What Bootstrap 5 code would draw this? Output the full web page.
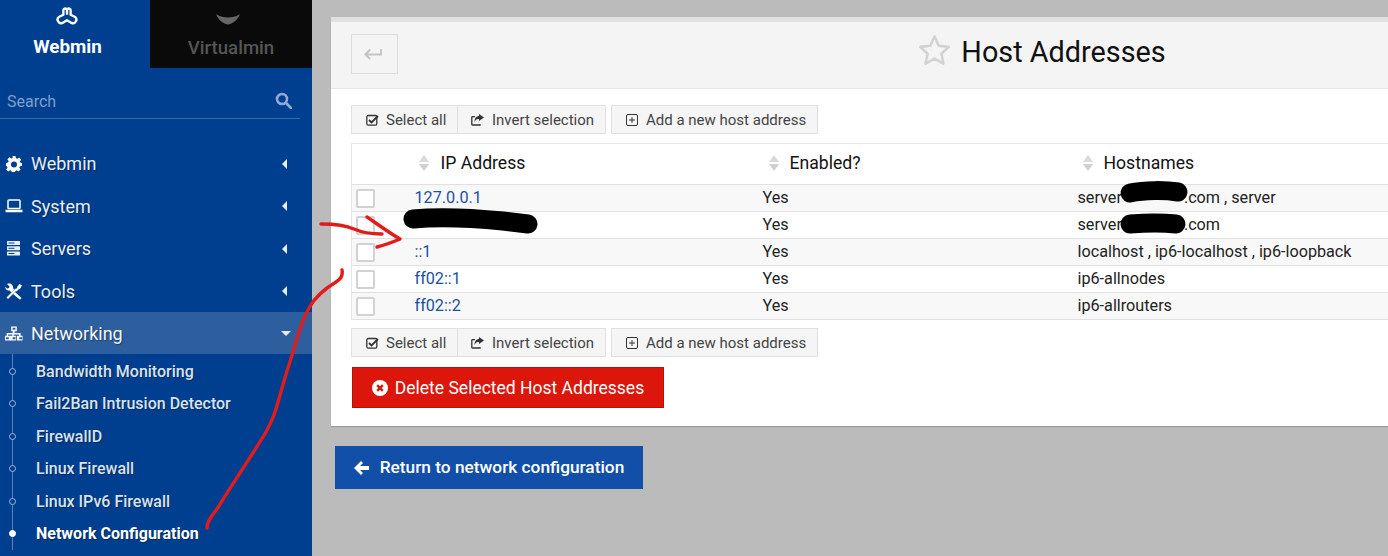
<!doctype html>
<html lang="en">
<head>
<meta charset="utf-8">
<title>Host Addresses</title>
<link href="https://cdn.jsdelivr.net/npm/bootstrap@5.3.0/dist/css/bootstrap.min.css" rel="stylesheet">
<style>
html,body{height:100%;overflow:hidden}
body{font-family:Roboto,"Liberation Sans",sans-serif;background:#bbb;color:#222;position:relative}
.shell{width:1388px;height:556px;overflow:hidden}
.side{width:312px;flex:none;background:#003f8f;color:#e8edf6;height:556px;overflow:hidden}
.tab-w,.tab-v{height:68px;text-align:center;font-weight:500;line-height:21px}
.tab-w{width:150px;color:#fff;font-weight:700;font-size:18.8px;padding:7px 15px 0 0}
.tab-v{width:162px;background:#0a0a0a;color:#565656;font-size:18.6px;padding-top:13px}
.tab-v svg{display:block;margin:0 auto 13px;transform:translateX(-3px)}
.tab-w svg{display:block;margin:0 auto 10px;transform:translateX(-1px)}
.searchbar{height:36px;margin:15px 12px 0 0;padding:9px 8px 0 7px;border-bottom:1px solid #3a68a8;color:#7f9fcc;font-size:16px;line-height:20px}
.menu-list{margin:23.45px 0 0;padding:0;list-style:none}
.menu-i{height:42.5px;padding:0 23px 0 6px;font-size:18px;color:#e8edf6;text-shadow:1px 1px 1px rgba(0,0,0,.35)}
.menu-i.on{height:42px;background:#2d5e9e;color:#f3f6fb;padding:0 22px 0 6px}
.menu-i .lbl{margin-left:8px}
.menu-i .ico{width:18px;flex:none;margin-left:-1px}
.caret-l{width:0;height:0;border:5px solid transparent;border-right-color:#e8edf6;border-left:0;margin-right:2px}
.caret-d{width:0;height:0;border:5px solid transparent;border-top-color:#e8edf6;border-bottom:0;margin-right:-1px}
.sub-list{margin:0 0 0 12px;padding:.55px 0 0;list-style:none;border-left:1px solid #5c83b9}
.sub-i{height:32.5px;line-height:33px;padding-left:23px;font-size:16px;font-weight:500;color:#d9e2f0;position:relative;text-shadow:1px 1px 1px rgba(0,0,0,.35);white-space:nowrap}
.sub-i::before{content:"";position:absolute;left:-4px;top:13px;width:7px;height:7px;border-radius:50%;border:1px solid #9db5d6;background:#003f8f}
.sub-i.on{color:#fff;font-weight:700}
.sub-i.on::before{background:#fff;border-color:#fff}
.stage{padding:17px 0 0 19px;width:1076px;flex:none}
.panel-box{width:1422px;height:409px;background:#fff;border-top:5px solid #e0e0e0;box-shadow:0 1px 1px rgba(0,0,0,.18)}
.panel-top{height:67px;background:#f4f4f4;border-bottom:1px solid #e6e6e6;padding:12px 20px;position:relative}
.back-b{width:47px;height:40px;border:1px solid #dcdcdc;background:#f4f4f4;border-radius:0;padding:0 4px 2px 0;line-height:1}
.h-title{flex:1;font-size:28.8px;line-height:34px;color:#111;font-weight:400;margin:0;gap:10px;padding-right:47px}
.h-title span{margin-top:1px}
.h-title svg{margin-bottom:3px}
.panel-body-x{padding:16px 20px 0}
.tb-row{gap:5px}
.tb-b{--bs-btn-border-radius:0;--bs-btn-padding-y:0;--bs-btn-padding-x:13px;--bs-btn-font-size:15px;--bs-btn-color:#444;--bs-btn-bg:#f5f5f5;--bs-btn-border-color:#e0e0e0;height:29px;line-height:27px;display:flex;align-items:center;gap:8px;white-space:nowrap;padding-top:1px}
.tb-b svg{flex:none}
.w-sel{width:107px;padding-left:14px;gap:7px}
.w-inv{width:149px;margin-left:-1px}
.w-add{width:207px;padding-left:14px;gap:8px}
.grid-t{table-layout:fixed;width:1386px;margin:9px 0 8px;border:1px solid #e6e6e6;border-bottom-color:#e0e0e0;font-size:16.2px;--bs-table-striped-bg:#f8f8f8;--bs-table-border-color:#e4e4e4;--bs-table-color:#222;--bs-table-striped-color:#222}
.grid-t th{height:41px;font-weight:400;font-size:17.6px;padding:0 0 2px;vertical-align:middle;color:#111;border-bottom-width:1px}
.grid-t td{height:27px;padding:0 10px 1px;vertical-align:middle;line-height:22px;border-bottom-width:1px;white-space:nowrap}
.grid-t td.first{padding:0 4px}
.grid-t a{color:#1a50a5;text-decoration:none}
.c-1{width:53px}.c-2{width:348px}.c-3{width:315px}
.th-in{gap:11px}
.pad-a{padding-left:14px}.pad-a span:last-child{margin-left:1px}.pad-b{padding-left:16px}.pad-c{padding-left:15px}
.srt{display:inline-block;width:10px}
.srt i{display:block;width:0;height:0;border:5px solid transparent;border-left-width:5px;border-right-width:5px}
.srt i:first-child{border-top:0;border-bottom:7px solid #d9d9d9;margin-bottom:2px}
.srt i:last-child{border-bottom:0;border-top:7px solid #d0d0d0}
.cb-x{display:block;width:19px;height:19px;border:2px solid #d2d2d2;background:#fff;border-radius:2px}
.gap-x{display:inline-block;width:62px}
.del-b{--bs-btn-border-radius:0;--bs-btn-bg:#dc160a;--bs-btn-border-color:#b81208;--bs-btn-color:#fff;--bs-btn-font-size:17.5px;--bs-btn-padding-x:0;--bs-btn-padding-y:0;width:312px;height:41px;margin:10px 0 0 1px;gap:7px;padding-top:1px}
.ret-b{--bs-btn-border-radius:0;--bs-btn-bg:#124fa8;--bs-btn-border-color:#124fa8;--bs-btn-color:#fff;--bs-btn-font-size:17.3px;--bs-btn-padding-x:0;--bs-btn-padding-y:0;width:308px;height:43px;margin:20px 0 0 4px;gap:11px;font-weight:500}
.scrib{position:absolute;left:0;top:0;pointer-events:none}
</style>
</head>
<body>
<div class="shell d-flex">
  <aside class="side">
    <div class="d-flex">
      <div class="tab-w">
        <svg width="24" height="20" viewBox="0 0 26 22" fill="none" stroke="#fff" stroke-width="2.600" stroke-linejoin="round"><path d="M9 3.500c0-2 2-2.400 4-1 2-1.400 4-1 4 1v5l4 2c2 1 3 3 2 5s-3 3-5 2l-5-3-5 3c-2 1-4 0-5-2s0-4 2-5l4-2z"/><path d="M13 2.500v6"/></svg>
        Webmin
      </div>
      <div class="tab-v">
        <svg width="24" height="12" viewBox="0 0 30 14" fill="#666"><path d="M0 1c5 3 10 4 15 4s10-1 15-4c-3 7-8 11-15 13C8 12 3 8 0 1z"/></svg>
        Virtualmin
      </div>
    </div>
    <div class="searchbar d-flex justify-content-between">
      <span>Search</span>
      <svg width="17" height="17" viewBox="0 0 17 17" fill="none" stroke="#8fabd3" stroke-width="2.600"><circle cx="7" cy="7" r="5"/><path d="M11 11l5 5" stroke-linecap="round"/></svg>
    </div>
    <ul class="menu-list">
      <li class="menu-i d-flex align-items-center">
        <svg class="ico" width="16" height="16" viewBox="0 0 16 16" fill="#fff"><path fill-rule="evenodd" d="M6.500 0h3l.4 2.200 1.300.6L13.100 1.500l2.100 2.100-1.300 1.900.6 1.300L16 6.900v3l-2.100.4-.6 1.300 1.300 1.900-2.100 2.100-1.900-1.300-1.300.6-.4 2.100h-3l-.4-2.100-1.300-.6-1.900 1.300-2.100-2.100 1.300-1.900-.6-1.300L0 9.900v-3l2.100-.4.6-1.300-1.300-1.900 2.100-2.100 1.900 1.300 1.300-.6zM8 5.400a3 3 0 1 0 0 6 3 3 0 0 0 0-6z"/></svg>
        <span class="lbl flex-grow-1">Webmin</span><span class="caret-l"></span>
      </li>
      <li class="menu-i d-flex align-items-center">
        <svg class="ico" width="18" height="14" viewBox="0 0 18 14" fill="none" stroke="#fff" stroke-width="1.500"><rect x="3" y="1" width="12" height="8.500" rx=".8"/><path d="M.5 12h17" stroke-width="2.500"/></svg>
        <span class="lbl flex-grow-1">System</span><span class="caret-l"></span>
      </li>
      <li class="menu-i d-flex align-items-center">
        <svg class="ico" width="16" height="15" viewBox="0 0 16 15" fill="#e8edf6"><path fill-rule="evenodd" d="M1.600 0h11.800c.3 0 .6.300.6.600v2.800c0 .3-.3.600-.6.600H1.600A.6.600 0 0 1 1 3.400V.6c0-.3.300-.6.600-.6zm0 5.300h11.800c.3 0 .6.300.6.600v2.800c0 .3-.3.600-.6.600H1.600a.6.600 0 0 1-.6-.6V5.900c0-.3.300-.6.600-.6zm0 5.300h11.800c.3 0 .6.300.6.600V14c0 .3-.3.600-.6.600H1.600A.6.600 0 0 1 1 14v-2.800c0-.3.300-.6.600-.6zM2.500 1.500v1h6v-1zm0 5.300v1h6v-1zm0 5.300v1h6v-1z"/></svg>
        <span class="lbl flex-grow-1">Servers</span><span class="caret-l"></span>
      </li>
      <li class="menu-i d-flex align-items-center">
        <svg class="ico" width="17" height="17" viewBox="0 0 17 17" fill="#fff"><path d="M1 14.500L10 5.500l1.500 1.500L2.500 16z"/><path d="M7 2.500C6 .5 3.500 0 1.500 1L4 3.500 3.500 5 1.500 5.500-.2 3.500C-.5 6 1.500 8 4 7.500L6 9.500 8.500 7z"/><path d="M14 1l2.500 1.500-2 3.500-1.500.5-2 2 -1.500-1.500 2-2 .5-1.500z"/><path d="M7.500 11l2-2 6.500 6-1.500 1.700z"/></svg>
        <span class="lbl flex-grow-1">Tools</span><span class="caret-l"></span>
      </li>
      <li class="menu-i on d-flex align-items-center">
        <svg class="ico" width="19" height="15" viewBox="0 0 19 15" fill="#fff"><path fill-rule="evenodd" d="M6.500 0h6v5h-2.300v2h6.300v3h2v5h-6v-5h2.300V8.500h-5.600V10h2.300v5h-6v-5h2.300V8.500H3.200V10h2.300v5h-6v-5h2.300V7h6.400V5H6.500zM8 1.500v2h3v-2zM1 11.500v2h3v-2zM8 11.500v2h3v-2zM15 11.500v2h3v-2z"/></svg>
        <span class="lbl flex-grow-1">Networking</span><span class="caret-d"></span>
      </li>
    </ul>
    <ul class="sub-list">
      <li class="sub-i">Bandwidth Monitoring</li>
      <li class="sub-i">Fail2Ban Intrusion Detector</li>
      <li class="sub-i">FirewallD</li>
      <li class="sub-i">Linux Firewall</li>
      <li class="sub-i">Linux IPv6 Firewall</li>
      <li class="sub-i on">Network Configuration</li>
    </ul>
  </aside>
  <main class="stage">
    <section class="panel-box">
      <header class="panel-top d-flex align-items-start">
        <button class="btn back-b" aria-label="Back"><svg width="18" height="12" viewBox="0 0 18 12" fill="none" stroke="#c4c4c4" stroke-width="2"><path d="M17 1v5.500H2"/><path d="M6 1.500L1.500 6.500 6 11"/></svg></button>
        <h1 class="h-title d-flex justify-content-center align-items-center">
          <svg width="33" height="32" viewBox="0 0 33 32" fill="none" stroke="#d2d2d2" stroke-width="2.600" stroke-linejoin="round"><path d="M16.500 2.500l4.300 9.200 10 1.200-7.400 6.800 2 9.900-8.900-5-8.900 5 2-9.900L2.200 12.900l10-1.200z"/></svg>
          <span>Host Addresses</span>
        </h1>
      </header>
      <div class="panel-body-x">
        <div class="d-flex tb-row">
          <div class="btn-group">
            <button class="btn tb-b w-sel"><svg width="13" height="12" viewBox="0 0 13 12" fill="none" stroke="#333" stroke-width="1.300"><rect x=".8" y="1.500" width="10" height="9.700" rx="1.500"/><path d="M3 6l2.500 2.500L12 2" stroke-width="1.800"/></svg>Select all</button>
            <button class="btn tb-b w-inv"><svg width="13" height="12" viewBox="0 0 13 12" fill="none" stroke="#333" stroke-width="1.300"><path d="M9 10v1H1.500A.7.700 0 0 1 .8 10.300V3.500c0-.5.300-.8.800-.8H4"/><path fill="#333" stroke="none" d="M8 0l5 3.500L8 7V5C6 5 4.500 5.500 3.500 8c0-4 2-6 4.500-6z"/></svg>Invert selection</button>
          </div>
          <button class="btn tb-b w-add"><svg width="12" height="12" viewBox="0 0 12 12" fill="none" stroke="#333" stroke-width="1"><rect x=".5" y=".5" width="11" height="11" rx="1.500"/><path d="M3 6h6M6 3v6"/></svg>Add a new host address</button>
        </div>
        <table class="table table-striped grid-t">
          <thead>
            <tr>
              <th class="c-1"></th>
              <th class="c-2"><div class="d-flex align-items-center th-in pad-a"><span class="srt"><i></i><i></i></span><span>IP Address</span></div></th>
              <th class="c-3"><div class="d-flex align-items-center th-in pad-b"><span class="srt"><i></i><i></i></span><span>Enabled?</span></div></th>
              <th><div class="d-flex align-items-center th-in pad-c"><span class="srt"><i></i><i></i></span><span>Hostnames</span></div></th>
            </tr>
          </thead>
          <tbody>
            <tr><td class="first"><span class="cb-x"></span></td><td><a href="#">127.0.0.1</a></td><td>Yes</td><td>server<span class="gap-x"></span>.com , server</td></tr>
            <tr><td class="first"><span class="cb-x"></span></td><td></td><td>Yes</td><td>server<span class="gap-x"></span>.com</td></tr>
            <tr><td class="first"><span class="cb-x"></span></td><td><a href="#">::1</a></td><td>Yes</td><td>localhost , ip6-localhost , ip6-loopback</td></tr>
            <tr><td class="first"><span class="cb-x"></span></td><td><a href="#">ff02::1</a></td><td>Yes</td><td>ip6-allnodes</td></tr>
            <tr><td class="first"><span class="cb-x"></span></td><td><a href="#">ff02::2</a></td><td>Yes</td><td>ip6-allrouters</td></tr>
          </tbody>
        </table>
        <div class="d-flex tb-row">
          <div class="btn-group">
            <button class="btn tb-b w-sel"><svg width="13" height="12" viewBox="0 0 13 12" fill="none" stroke="#333" stroke-width="1.300"><rect x=".8" y="1.500" width="10" height="9.700" rx="1.500"/><path d="M3 6l2.500 2.500L12 2" stroke-width="1.800"/></svg>Select all</button>
            <button class="btn tb-b w-inv"><svg width="13" height="12" viewBox="0 0 13 12" fill="none" stroke="#333" stroke-width="1.300"><path d="M9 10v1H1.500A.7.700 0 0 1 .8 10.300V3.500c0-.5.300-.8.800-.8H4"/><path fill="#333" stroke="none" d="M8 0l5 3.500L8 7V5C6 5 4.500 5.500 3.500 8c0-4 2-6 4.500-6z"/></svg>Invert selection</button>
          </div>
          <button class="btn tb-b w-add"><svg width="12" height="12" viewBox="0 0 12 12" fill="none" stroke="#333" stroke-width="1"><rect x=".5" y=".5" width="11" height="11" rx="1.500"/><path d="M3 6h6M6 3v6"/></svg>Add a new host address</button>
        </div>
        <button class="btn del-b d-flex align-items-center justify-content-center"><svg width="16" height="16" viewBox="0 0 16 16"><circle cx="8" cy="8" r="8" fill="#fff"/><path d="M5.200 5.200l5.600 5.600M10.800 5.200l-5.600 5.600" stroke="#dc160a" stroke-width="2.400"/></svg>Delete Selected Host Addresses</button>
      </div>
    </section>
    <button class="btn ret-b d-flex align-items-center justify-content-center"><svg width="15" height="14" viewBox="0 0 15 14" fill="#fff"><path d="M7 0l2 2-3 3h9v4H6l3 3-2 2-7-7z"/></svg>Return to network configuration</button>
  </main>
</div>
<svg class="scrib" width="1388" height="556" viewBox="0 0 1388 556" fill="none" stroke-linecap="round" stroke-linejoin="round">
  <path d="M413 219c30-3 60-1 90 2l25 3" stroke="#000" stroke-width="19"/>
  <path d="M1130 193c15-3 35-3 48-1" stroke="#000" stroke-width="19"/>
  <path d="M1130 224c15-1 35-1 46 0" stroke="#000" stroke-width="19"/>
  <g stroke="#e21b1b" stroke-width="3.400">
    <path d="M321 224c12 0 24 1 33 5 9 4 18 5 28 5"/>
    <path d="M367 217c9 6 24 17 33 22-7 3-15 6-23 8"/>
    <path d="M342 270c1 5-1 9-6 12-10 6-20 13-27 26-6 11-9 20-12 30-3 11-7 24-10 33-4 13-8 28-11 38-3 10-7 17-10 23-10 17-35 54-47 74-6 9-12 14-12 22"/>
  </g>
</svg>
</body>
</html>
